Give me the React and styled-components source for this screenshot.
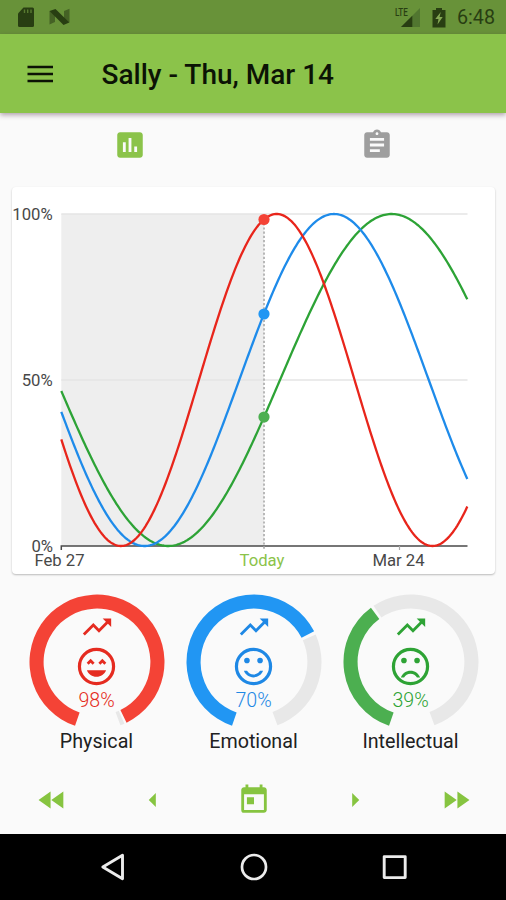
import React from "react";
import styled, { createGlobalStyle } from "styled-components";
import {
  MdArrowLeft,
  MdArrowRight,
  MdAssessment,
  MdAssignment,
  MdFastForward,
  MdFastRewind,
  MdToday,
  MdTrendingUp,
} from "react-icons/md";

const GlobalStyle = createGlobalStyle`
  * { box-sizing: border-box; }
  body { margin: 0; background: #fafafa; }
  svg { display: block; flex: none; }
`;

const Screen = styled.div`
  display: flex;
  flex-direction: column;
  width: 506px;
  height: 900px;
  overflow: hidden;
  background: #fafafa;
  color: #212121;
  font-family: Roboto, sans-serif;
`;

const StatusBar = styled.div`
  display: flex;
  align-items: center;
  flex: none;
  height: 34px;
  padding: 0 11px 0 17px;
  background: #689239;
  color: #283e12;
`;

const StatusGroup = styled.div`
  display: flex;
  align-items: center;
  gap: ${(p) => p.$gap}px;
  margin-left: ${(p) => (p.$end ? "auto" : 0)};
`;

const Clock = styled.span`
  font-size: 19.7px;
  line-height: 34px;
  padding-top: 2px;
`;

const AppBar = styled.header`
  display: flex;
  align-items: center;
  flex: none;
  height: 79px;
  padding: 0 22.5px;
  gap: 45px;
  background: #8bc34a;
  box-shadow: 0 2px 5px rgba(70, 30, 60, 0.42);
  z-index: 1;
`;

const IconButton = styled.button`
  display: grid;
  place-items: center;
  padding: 0;
  border: 0;
  background: none;
  color: ${(p) => p.$color};
  font-size: 34px;
`;

const Title = styled.h1`
  margin: 0;
  padding-top: 2px;
  color: #0c1305;
  font-size: 28px;
  font-weight: 500;
  line-height: 34px;
  white-space: nowrap;
`;

const Tabs = styled.nav`
  display: grid;
  grid-template-columns: 1fr 1fr;
  flex: none;
  height: 74px;
  padding: 0 6px 10px;
`;

const ChartCard = styled.section`
  flex: none;
  height: 387px;
  margin: 0 11px 0 12px;
  border-radius: 4px;
  background: #fff;
  box-shadow: 0 1px 2px rgba(0, 0, 0, 0.26);
`;

const AxisLabel = styled.text`
  font-family: Roboto, sans-serif;
  font-size: 16.7px;
  fill: ${(p) => p.$color || "#484848"};
`;

const Gauges = styled.section`
  display: grid;
  grid-template-columns: repeat(3, 157px);
  justify-content: center;
  flex: none;
  height: 190px;
  padding: 19.5px 0 0 1px;
`;

const Gauge = styled.div`
  display: grid;
  grid-template-columns: 1fr;
  grid-template-rows: 136px 24px;
  justify-items: center;
  align-content: start;
  color: ${(p) => p.$color};
`;

const Ring = styled.svg`
  grid-area: 1 / 1;
  width: 136px;
  height: 136px;
`;

const Readout = styled.div`
  grid-area: 1 / 1;
  display: flex;
  flex-direction: column;
  align-items: center;
  padding-top: 16.5px;
`;

const Face = styled.svg`
  width: 45px;
  height: 45px;
  fill: currentColor;
`;

const Trend = styled.div`
  font-size: 34px;
`;

const Percent = styled.span`
  font-size: 19.6px;
  font-weight: 300;
  line-height: 24px;
`;

const GaugeName = styled.span`
  color: #212121;
  font-size: 19.7px;
  line-height: 24px;
`;

const DateControls = styled.div`
  display: grid;
  grid-template-columns: repeat(5, 1fr);
  flex: none;
  height: 69.5px;
  padding: 2px 0 0 1px;
`;

const SystemNav = styled.footer`
  display: flex;
  align-items: center;
  justify-content: center;
  gap: 111px;
  flex: 1;
  padding-left: 1px;
  background: #000;
`;

const LEFT = 49.3;
const RIGHT = 455.5;
const TOP = 27;
const BOTTOM = 359;
const TODAY = 252;
const DAY = 13.54;

const CYCLES = [
  { color: "#4caf50", line: "#2da336", period: 33, peak: 9.43, dot: 230 },
  { color: "#2196f3", line: "#1e8bea", period: 28, peak: 5.17, dot: 127 },
  { color: "#f44336", line: "#e8251b", period: 23, peak: 0.94, dot: 32.5 },
];

function cyclePath({ period, peak }) {
  const points = [];
  for (let x = LEFT; x <= RIGHT; x += 1.45) {
    const days = (x - TODAY) / DAY - peak;
    const level = (1 + Math.cos((2 * Math.PI * days) / period)) / 2;
    points.push(`${x.toFixed(2)} ${(BOTTOM - level * (BOTTOM - TOP)).toFixed(2)}`);
  }
  return `M${points.join("L")}`;
}

function Chart() {
  return (
    <svg width="483" height="387" viewBox="0 0 483 387">
      <rect x={LEFT} y={TOP} width={TODAY - LEFT} height={BOTTOM - TOP} fill="#eeeeee" />
      <path d={`M${LEFT} 27H${RIGHT}M${LEFT} 193H${RIGHT}`} stroke="#e5e5e5" strokeWidth="1.5" />
      <path d={`M${LEFT} 363V359H${RIGHT}`} fill="none" stroke="#4a4a4a" strokeWidth="1.5" />
      <path d="M387.5 359V363" stroke="#aaa" strokeWidth="1.2" />
      <path d={`M${TODAY} 32V363`} stroke="#b8b8b8" strokeWidth="2" strokeDasharray="2.2 2" />
      {CYCLES.map((c) => (
        <path key={c.color} d={cyclePath(c)} fill="none" stroke={c.line} strokeWidth="2.3" />
      ))}
      {CYCLES.map((c) => (
        <circle key={c.color} cx={TODAY} cy={c.dot} r="5.6" fill={c.color} />
      ))}
      <AxisLabel x="40.7" y="33" textAnchor="end">100%</AxisLabel>
      <AxisLabel x="40.7" y="199" textAnchor="end">50%</AxisLabel>
      <AxisLabel x="41" y="364.5" textAnchor="end">0%</AxisLabel>
      <AxisLabel x="47.5" y="379" textAnchor="middle">Feb 27</AxisLabel>
      <AxisLabel x="250" y="379" textAnchor="middle" $color="#8bc34a">Today</AxisLabel>
      <AxisLabel x="386.5" y="379" textAnchor="middle">Mar 24</AxisLabel>
    </svg>
  );
}

function sector(from, to) {
  const outer = 67.5;
  const inner = 53.4;
  const at = (r, deg) => {
    const a = (deg * Math.PI) / 180;
    return `${(68 + r * Math.sin(a)).toFixed(2)} ${(68 - r * Math.cos(a)).toFixed(2)}`;
  };
  const large = to - from > 180 ? 1 : 0;
  return `M${at(outer, from)}A${outer} ${outer} 0 ${large} 1 ${at(outer, to)}L${at(inner, to)}A${inner} ${inner} 0 ${large} 0 ${at(inner, from)}Z`;
}

const EYES = "M7 8.5a1.5 1.5 0 1 0 3 0a1.5 1.5 0 1 0-3 0zM14 8.5a1.5 1.5 0 1 0 3 0a1.5 1.5 0 1 0-3 0z";
const FACES = {
  laughing:
    "M13 9.94L14.06 11l1.06-1.06L16.18 11l1.06-1.06-2.12-2.12zM8.88 9.94L9.94 11 11 9.94 8.88 7.82 6.76 9.94 7.82 11zM12 17.5c2.33 0 4.31-1.46 5.11-3.5H6.89c.8 2.04 2.78 3.5 5.11 3.5z",
  smiling: `${EYES}M12 16c-1.48 0-2.75-.81-3.45-2H6.88c.8 2.05 2.79 3.5 5.12 3.5s4.32-1.45 5.12-3.5h-1.67c-.7 1.19-1.97 2-3.45 2z`,
  sad: `${EYES}M12 14c-2.33 0-4.32 1.45-5.12 3.5h1.67c.69-1.19 1.97-2 3.45-2s2.75.81 3.45 2h1.67c-.8-2.05-2.79-3.5-5.12-3.5z`,
};

function Mood({ mood }) {
  return (
    <Face viewBox="0 0 24 24">
      <circle cx="12" cy="12" r="9.1" fill="none" stroke="currentColor" strokeWidth="1.7" />
      <path d={FACES[mood]} transform={mood === "laughing" ? undefined : "translate(0 .3)"} />
    </Face>
  );
}

const GAUGES = [
  { name: "Physical", value: 98, end: 154, rest: 156, color: "#f44336", ink: "#e52b20", mood: "laughing" },
  { name: "Emotional", value: 70, end: 63, rest: 66, color: "#2196f3", ink: "#1e88e5", mood: "smiling" },
  { name: "Intellectual", value: 39, end: -36.4, rest: -33.7, color: "#4caf50", ink: "#2ea335", mood: "sad" },
];

function StatusIcons() {
  return (
    <>
      <StatusGroup $gap={15}>
        <svg width="17" height="22" viewBox="0 0 17 22">
          <path d="M6.5 1.5H15.5Q17 1.5 17 3V19.5Q17 21 15.5 21H2.5Q1 21 1 19.5V7.5Z" fill="currentColor" />
          <path d="M7.5 3.5V7M10.7 3.5V7M14 3.5V7" stroke="#587a30" strokeWidth="1.4" />
        </svg>
        <svg width="21" height="18" viewBox="0 0 21 18">
          <path d="M.5 3L6 6V14L.5 16.5ZM15 3L20.5 .8V14.5L15 12Z" fill="#456225" />
          <path d="M.5 3L6.5 1L20.3 14.5L14.5 17Z" fill="currentColor" />
        </svg>
      </StatusGroup>
      <StatusGroup $gap={11.5} $end>
        <svg width="27" height="22" viewBox="0 0 27 22">
          <path d="M27 2V21H8Z" fill="#517630" />
          <path d="M19.3 9.7V21H8Z" fill="currentColor" />
          <text x="2" y="10" fontFamily="Roboto, sans-serif" fontSize="11" fontWeight="500" textLength="12.8" lengthAdjust="spacingAndGlyphs" fill="currentColor">LTE</text>
        </svg>
        <svg width="14" height="22" viewBox="0 0 14 22">
          <path d="M4 2H10V4H13.5V21.5H.5V4H4Z" fill="currentColor" />
          <path d="M8.8 6L3.3 13H6.5L5.5 18.5L10.7 11H7.5Z" fill="#84a854" />
        </svg>
        <Clock>6:48</Clock>
      </StatusGroup>
    </>
  );
}

function MenuIcon() {
  return (
    <svg width="34" height="34" viewBox="0 0 34 34">
      <path d="M4.5 10H30M4.5 17H30M4.5 24H30" stroke="currentColor" strokeWidth="2.4" />
    </svg>
  );
}

export default function App() {
  return (
    <Screen>
      <GlobalStyle />
      <StatusBar>
        <StatusIcons />
      </StatusBar>
      <AppBar>
        <IconButton $color="#0c1305" aria-label="Menu"><MenuIcon /></IconButton>
        <Title>Sally - Thu, Mar 14</Title>
      </AppBar>
      <Tabs>
        <IconButton $color="#8bc34a" aria-label="Chart"><MdAssessment /></IconButton>
        <IconButton $color="#9e9e9e" aria-label="Details"><MdAssignment /></IconButton>
      </Tabs>
      <ChartCard>
        <Chart />
      </ChartCard>
      <Gauges>
        {GAUGES.map(({ name, value, end, rest, color, ink, mood }) => (
          <Gauge key={name} $color={ink}>
            <Ring viewBox="0 0 136 136">
              <path d={sector(rest, 159.7)} fill="#e8e8e8" />
              <path d={sector(-161, end)} fill={color} />
            </Ring>
            <Readout>
              <Trend><MdTrendingUp /></Trend>
              <Mood mood={mood} />
              <Percent>{value}%</Percent>
            </Readout>
            <GaugeName>{name}</GaugeName>
          </Gauge>
        ))}
      </Gauges>
      <DateControls>
        <IconButton $color="#86c440" aria-label="Previous week"><MdFastRewind /></IconButton>
        <IconButton $color="#86c440" aria-label="Previous day"><MdArrowLeft /></IconButton>
        <IconButton $color="#86c440" aria-label="Pick date"><MdToday /></IconButton>
        <IconButton $color="#86c440" aria-label="Next day"><MdArrowRight /></IconButton>
        <IconButton $color="#86c440" aria-label="Next week"><MdFastForward /></IconButton>
      </DateControls>
      <SystemNav>
        <svg width="30" height="30" viewBox="0 0 30 30" fill="none" stroke="#ececec" strokeWidth="2.9" strokeLinejoin="round">
          <path d="M24.5 3.2V26.8L4.8 15Z" />
        </svg>
        <svg width="30" height="30" viewBox="0 0 30 30" fill="none" stroke="#ececec" strokeWidth="2.7">
          <circle cx="15" cy="15" r="12" />
        </svg>
        <svg width="30" height="30" viewBox="0 0 30 30" fill="none" stroke="#ececec" strokeWidth="2.9" strokeLinejoin="round">
          <rect x="4.2" y="4.6" width="21" height="21" />
        </svg>
      </SystemNav>
    </Screen>
  );
}
